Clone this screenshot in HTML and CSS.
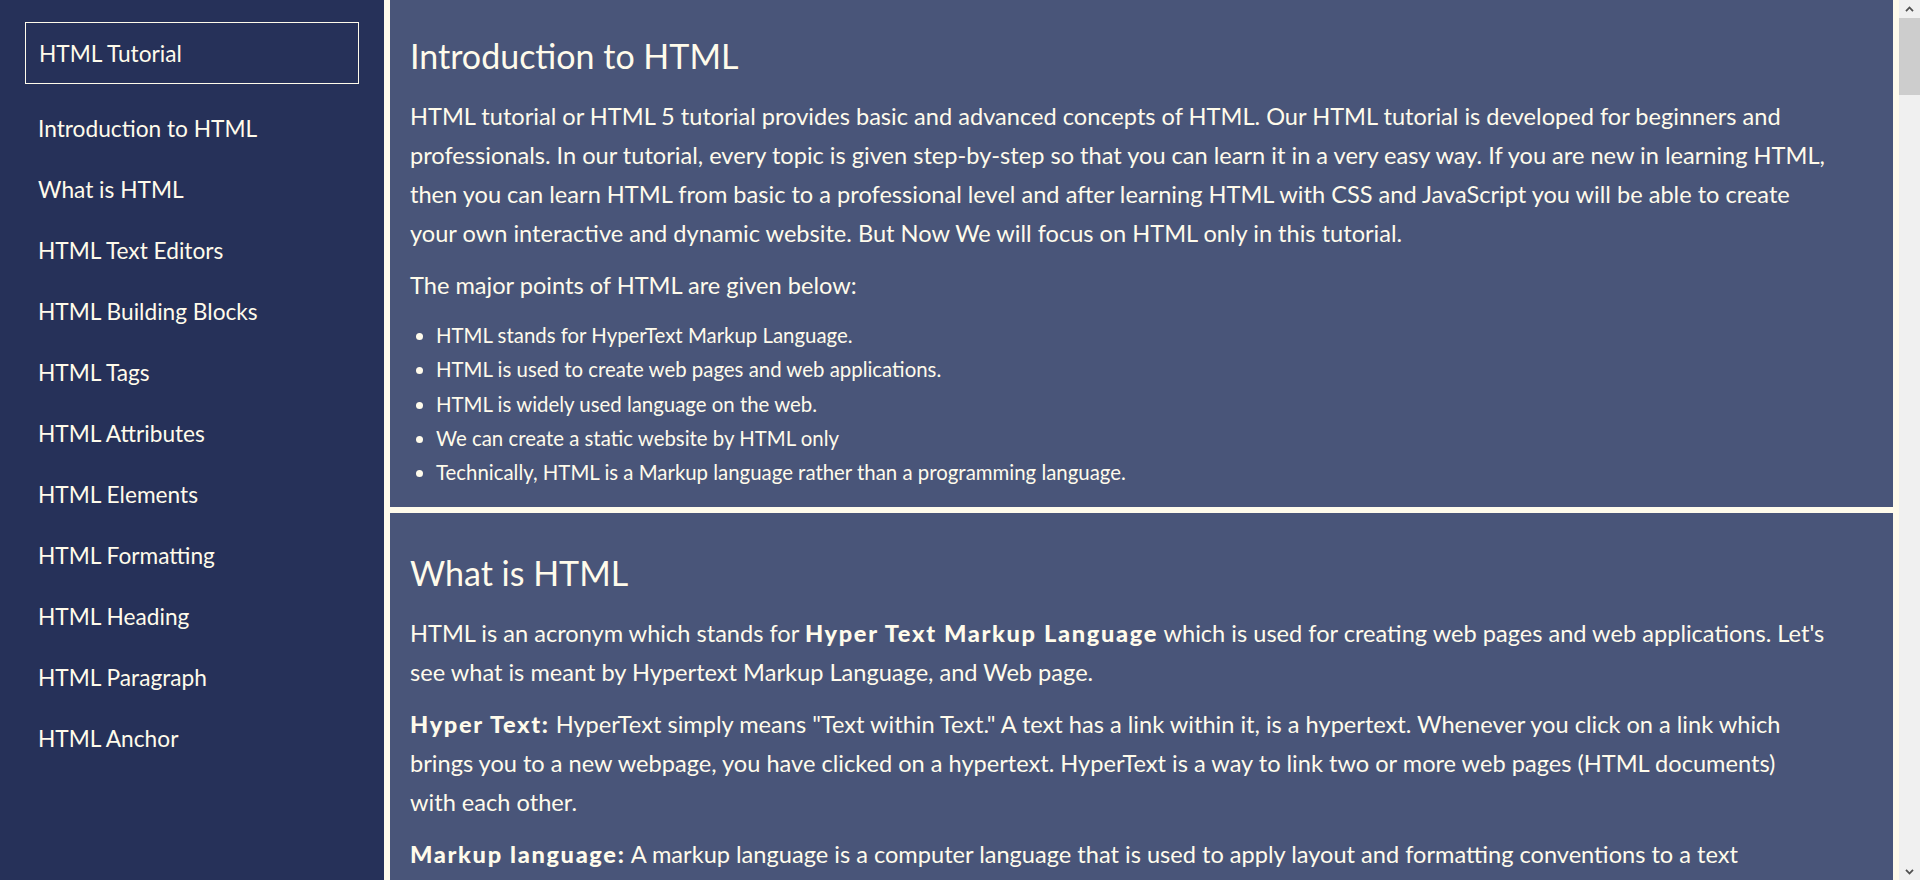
FILE: index.html
```html
<!DOCTYPE html>
<html lang="en">
<head>
<meta charset="utf-8">
<title>HTML Tutorial</title>
<link rel="stylesheet" href="styles.css">
</head>
<body>
<div class="layout">
  <nav class="sidebar">
    <div class="sidebar-title">HTML Tutorial</div>
    <ul class="nav-list">
      <li class="nav-item">Introduction to HTML</li>
      <li class="nav-item">What is HTML</li>
      <li class="nav-item">HTML Text Editors</li>
      <li class="nav-item">HTML Building Blocks</li>
      <li class="nav-item">HTML Tags</li>
      <li class="nav-item">HTML Attributes</li>
      <li class="nav-item">HTML Elements</li>
      <li class="nav-item">HTML Formatting</li>
      <li class="nav-item">HTML Heading</li>
      <li class="nav-item">HTML Paragraph</li>
      <li class="nav-item">HTML Anchor</li>
    </ul>
  </nav>
  <main class="content">
    <section class="topic">
      <h2 class="topic-title">Introduction to HTML</h2>
      <p class="topic-text">HTML tutorial or HTML 5 tutorial provides basic and advanced concepts of HTML. Our HTML tutorial is developed for beginners and<br>professionals. In our tutorial, every topic is given step-by-step so that you can learn it in a very easy way. If you are new in learning HTML,<br>then you can learn HTML from basic to a professional level and after learning HTML with CSS and JavaScript you will be able to create<br>your own interactive and dynamic website. But Now We will focus on HTML only in this tutorial.</p>
      <p class="topic-text">The major points of HTML are given below:</p>
      <ul class="topic-list">
        <li>HTML stands for HyperText Markup Language.</li>
        <li>HTML is used to create web pages and web applications.</li>
        <li>HTML is widely used language on the web.</li>
        <li>We can create a static website by HTML only</li>
        <li>Technically, HTML is a Markup language rather than a programming language.</li>
      </ul>
    </section>
    <section class="topic topic-next">
      <h2 class="topic-title">What is HTML</h2>
      <p class="topic-text">HTML is an acronym which stands for <b>Hyper Text Markup Language</b> which is used for creating web pages and web applications. Let's<br>see what is meant by Hypertext Markup Language, and Web page.</p>
      <p class="topic-text"><b>Hyper Text:</b> HyperText simply means "Text within Text." A text has a link within it, is a hypertext. Whenever you click on a link which<br>brings you to a new webpage, you have clicked on a hypertext. HyperText is a way to link two or more web pages (HTML documents)<br>with each other.</p>
      <p class="topic-text"><b>Markup language:</b> A markup language is a computer language that is used to apply layout and formatting conventions to a text<br>document. Markup language makes text more interactive and dynamic. It can turn text into images, tables, links, etc.</p>
    </section>
  </main>
  <div class="scrollbar">
    <div class="scroll-btn">
      <svg width="9" height="6" viewBox="0 0 9 6"><polyline points="1,5.2 4.5,1.5 8,5.2" fill="none" stroke="#505050" stroke-width="1.8"/></svg>
    </div>
    <div class="scroll-thumb"></div>
    <div class="scroll-track"></div>
    <div class="scroll-btn">
      <svg width="9" height="6" viewBox="0 0 9 6"><polyline points="1,0.8 4.5,4.5 8,0.8" fill="none" stroke="#505050" stroke-width="1.8"/></svg>
    </div>
  </div>
</div>
</body>
</html>
```
FILE: styles.css
```css
html, body {
  margin: 0;
  padding: 0;
  height: 100%;
  overflow: hidden;
}

body {
  font-family: Lato, "Open Sans", sans-serif;
  color: #fffbeb;
  background: #fffbeb;
}

.layout {
  display: flex;
  gap: 6px;
  height: 100vh;
  background: #fffbeb;
}

.sidebar {
  width: 384px;
  flex: none;
  background: #263159;
  padding: 22px 25px 0;
  box-sizing: border-box;
}

.sidebar-title {
  border: 1px solid #fffbeb;
  height: 60px;
  line-height: 61px;
  padding: 0 13px;
  font-size: 22.7px;
}

.nav-list {
  list-style: none;
  margin: 14px 0 0;
  padding: 0;
}

.nav-item {
  height: 61px;
  line-height: 61px;
  padding-left: 13px;
  font-size: 22.7px;
}

.content {
  flex: 1;
  min-width: 0;
  display: flex;
  flex-direction: column;
  gap: 6px;
  overflow: hidden;
}

.topic {
  flex: none;
  background: #495579;
  padding: 36px 20px 18px;
}

.topic-next {
  padding-top: 40px;
}

.topic-title {
  margin: 0 0 20px;
  font-size: 34px;
  font-weight: 400;
  line-height: 1.2;
}

.topic-text {
  margin: 0 0 13.5px;
  font-size: 23.6px;
  line-height: 38.9px;
}

.topic-text b {
  font-weight: 900;
  letter-spacing: 0.07em;
}

.topic-list {
  margin: 0;
  padding-left: 26px;
  font-size: 20.4px;
  line-height: 34.15px;
}

.scrollbar {
  width: 21px;
  flex: none;
  display: flex;
  flex-direction: column;
  background: #f0f0f0;
}

.scroll-btn {
  height: 17px;
  display: flex;
  align-items: center;
  justify-content: center;
}

.scroll-thumb {
  height: 77px;
  margin-top: 1px;
  background: #cdcdcd;
}

.scroll-track {
  flex: 1;
}
```
